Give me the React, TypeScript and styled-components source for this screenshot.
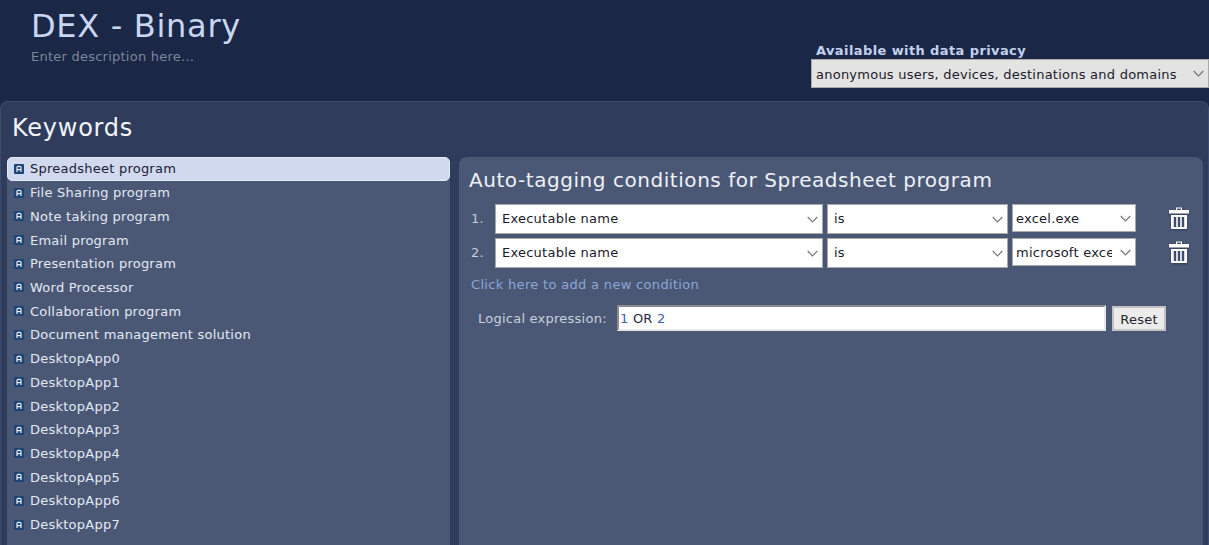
import React from 'react';
import styled, { createGlobalStyle } from 'styled-components';

const keywords = [
  'Spreadsheet program',
  'File Sharing program',
  'Note taking program',
  'Email program',
  'Presentation program',
  'Word Processor',
  'Collaboration program',
  'Document management solution',
  'DesktopApp0',
  'DesktopApp1',
  'DesktopApp2',
  'DesktopApp3',
  'DesktopApp4',
  'DesktopApp5',
  'DesktopApp6',
  'DesktopApp7',
];

const conditions = [
  { field: 'Executable name', op: 'is', value: 'excel.exe' },
  { field: 'Executable name', op: 'is', value: 'microsoft excel' },
];

const GlobalStyle = createGlobalStyle`
  html, body {
    margin: 0;
    height: 100%;
    overflow: hidden;
    background: #1a2747;
    font-family: "DejaVu Sans", sans-serif;
    font-size: 13px;
    letter-spacing: 0.24px;
  }
`;

const Page = styled.div`
  width: 1209px;
  height: 545px;
  overflow: hidden;
  display: flex;
  flex-direction: column;
`;

const Header = styled.header`
  height: 101px;
  flex: none;
  display: flex;
  justify-content: space-between;
  padding-left: 31px;
  box-sizing: border-box;
`;

const TitleBlock = styled.div`
  padding-top: 5px;
`;

const Title = styled.h1`
  margin: 0;
  font-size: 32px;
  line-height: 42px;
  font-weight: 400;
  letter-spacing: 0.7px;
  color: #c9d6f0;
`;

const Description = styled.div`
  margin-top: 2px;
  line-height: 16px;
  color: #7d8697;
`;

const PrivacyBlock = styled.div`
  width: 398px;
  padding-top: 43px;
`;

const PrivacyLabel = styled.div`
  padding-left: 5px;
  font-size: 13px;
  line-height: 16px;
  font-weight: 700;
  letter-spacing: 0.4px;
  color: #c3d1ee;
`;

const SelectBox = styled.div<{ $bg?: string; $height: number; $width: number }>`
  width: ${(p) => p.$width}px;
  height: ${(p) => p.$height}px;
  flex: none;
  box-sizing: border-box;
  border: 1px solid #a9a9a9;
  background: ${(p) => p.$bg || '#fff'};
  display: flex;
  align-items: center;
  justify-content: space-between;
  padding: 0 4px 0 5px;
  color: #1b1b2a;
  overflow: hidden;
`;

const SelectText = styled.span`
  white-space: nowrap;
  overflow: hidden;
`;

const PrivacyText = styled(SelectText)`
  margin: 2px 0 0 -1px;
`;

const FieldText = styled(SelectText)`
  margin: -1px 0 0 0;
  padding-left: 1px;
`;

const ValueText = styled(SelectText)`
  width: 96px;
  margin-left: -2px;
`;

const Chevron = styled.svg`
  width: 11px;
  height: 7px;
  flex: none;
  fill: none;
  stroke: #777;
  stroke-width: 1.2;
`;

const Main = styled.main`
  flex: 1;
  box-sizing: border-box;
  border: 1px solid #3d4b6e;
  border-bottom: 0;
  border-radius: 8px 8px 0 0;
  background: #303c5c;
  padding: 0 5px 0 6px;
  display: flex;
  flex-direction: column;
`;

const SectionTitle = styled.h2`
  margin: 0;
  padding: 9px 0 0 5px;
  height: 55px;
  box-sizing: border-box;
  font-size: 24px;
  line-height: 35px;
  font-weight: 400;
  letter-spacing: 0.75px;
  color: #f2f5fb;
  flex: none;
`;

const Columns = styled.div`
  flex: 1;
  display: grid;
  grid-template-columns: 443px 744px;
  gap: 9px;
  min-height: 0;
`;

const ListPanel = styled.ul`
  margin: 0;
  padding: 0;
  list-style: none;
  background: #4a5876;
  border-radius: 6px 6px 0 0;
`;

const ListRow = styled.li<{ $selected?: boolean }>`
  height: 23.73px;
  box-sizing: border-box;
  display: flex;
  align-items: center;
  gap: 6px;
  padding-left: ${(p) => (p.$selected ? '6px' : '7px')};
  color: ${(p) => (p.$selected ? '#1c2038' : '#e3e8f2')};
  background: ${(p) => (p.$selected ? '#d0d9ee' : 'transparent')};
  border: ${(p) => (p.$selected ? '1px solid #e4e9f5' : '0')};
  border-radius: ${(p) => (p.$selected ? '5px' : '0')};
`;

const KeywordIcon = styled.svg`
  width: 10px;
  height: 10px;
  flex: none;
`;

const RulesPanel = styled.section`
  background: #4a5876;
  border-radius: 8px 8px 0 0;
  padding: 8px 0 0 10px;
`;

const RulesTitle = styled.h3`
  margin: 0 0 9px;
  font-size: 20px;
  line-height: 30px;
  font-weight: 400;
  letter-spacing: 0.55px;
  color: #eef1f7;
`;

const ConditionRow = styled.div`
  display: flex;
  align-items: flex-start;
  gap: 4px;
  height: 34px;
`;

const RowNumber = styled.span`
  width: 22px;
  line-height: 29px;
  padding-left: 2px;
  box-sizing: border-box;
  color: #c5ccdb;
`;

const TrashButton = styled.button`
  border: 0;
  background: none;
  padding: 0;
  margin: 3px 0 0 29px;
  width: 20px;
  height: 22px;
  color: #fff;
  filter: drop-shadow(0 1px 1px rgba(20, 28, 50, 0.5));
`;

const AddLink = styled.a`
  display: block;
  margin: 5px 0 0 2px;
  line-height: 16px;
  letter-spacing: 0.32px;
  color: #8ba6d6;
`;

const ExpressionRow = styled.div`
  display: flex;
  align-items: center;
  margin: 12px 0 0 9px;
`;

const ExpressionLabel = styled.label`
  width: 139px;
  color: #c9cfdd;
`;

const ExpressionInput = styled.div`
  width: 489px;
  height: 26px;
  box-sizing: border-box;
  border: 2px solid;
  border-color: #8c8c8c #e8e8e8 #e8e8e8 #8c8c8c;
  background: #fff;
  padding-left: 1px;
  line-height: 23px;
  color: #232a44;
`;

const ExprRef = styled.span`
  color: #3a62b0;
`;

const ResetButton = styled.button`
  margin-left: 6px;
  width: 54px;
  height: 25px;
  box-sizing: border-box;
  border: 2px solid #c4c4c4;
  background: #ececec;
  padding: 2px 0 0;
  font-family: inherit;
  font-size: 13px;
  letter-spacing: 0.24px;
  color: #26262e;
`;

const Arrow = () => (
  <Chevron viewBox="0 0 11 7">
    <path d="M.7 1l4.8 4.8L10.3 1" />
  </Chevron>
);

const AIcon = () => (
  <KeywordIcon viewBox="0 0 10 10">
    <rect width="10" height="10" rx="1" fill="#1d4474" />
    <path d="M3 8V3.6Q3 2.4 4.2 2.4h1.6Q7 2.4 7 3.6V8M3 5.6h4" fill="none" stroke="#e8eef8" strokeWidth="1.2" />
  </KeywordIcon>
);

const TrashIcon = () => (
  <svg width="20" height="22" viewBox="0 0 20 22" fill="currentColor">
    <path fillRule="evenodd" d="M7 3V.5h6V3h7v3.5H0V3zm1.2 0h3.6V1.6H8.2z" />
    <path
      fillRule="evenodd"
      d="M2 8h16v13c0 .6-.4 1-1 1H3c-.6 0-1-.4-1-1zm2.8 2v10h2.4V10zm4 0v10h2.4V10zm4 0v10h2.4V10z"
    />
  </svg>
);

export default function App() {
  return (
    <Page>
      <GlobalStyle />
      <Header>
        <TitleBlock>
          <Title>DEX - Binary</Title>
          <Description>Enter description here...</Description>
        </TitleBlock>
        <PrivacyBlock>
          <PrivacyLabel>Available with data privacy</PrivacyLabel>
          <SelectBox $bg="#e3e3e3" $height={29} $width={398}>
            <PrivacyText>anonymous users, devices, destinations and domains</PrivacyText>
            <Arrow />
          </SelectBox>
        </PrivacyBlock>
      </Header>
      <Main>
        <SectionTitle>Keywords</SectionTitle>
        <Columns>
          <ListPanel>
            {keywords.map((name, i) => (
              <ListRow key={name} $selected={i === 0}>
                <AIcon />
                {name}
              </ListRow>
            ))}
          </ListPanel>
          <RulesPanel>
            <RulesTitle>Auto-tagging conditions for Spreadsheet program</RulesTitle>
            {conditions.map((c, i) => (
              <ConditionRow key={i}>
                <RowNumber>{i + 1}.</RowNumber>
                <SelectBox $height={30} $width={328}>
                  <FieldText>{c.field}</FieldText>
                  <Arrow />
                </SelectBox>
                <SelectBox $height={30} $width={181}>
                  <FieldText>{c.op}</FieldText>
                  <Arrow />
                </SelectBox>
                <SelectBox $height={28} $width={124}>
                  <ValueText>{c.value}</ValueText>
                  <Arrow />
                </SelectBox>
                <TrashButton aria-label="Delete condition">
                  <TrashIcon />
                </TrashButton>
              </ConditionRow>
            ))}
            <AddLink>Click here to add a new condition</AddLink>
            <ExpressionRow>
              <ExpressionLabel>Logical expression:</ExpressionLabel>
              <ExpressionInput>
                <ExprRef>1</ExprRef> OR <ExprRef>2</ExprRef>
              </ExpressionInput>
              <ResetButton>Reset</ResetButton>
            </ExpressionRow>
          </RulesPanel>
        </Columns>
      </Main>
    </Page>
  );
}
